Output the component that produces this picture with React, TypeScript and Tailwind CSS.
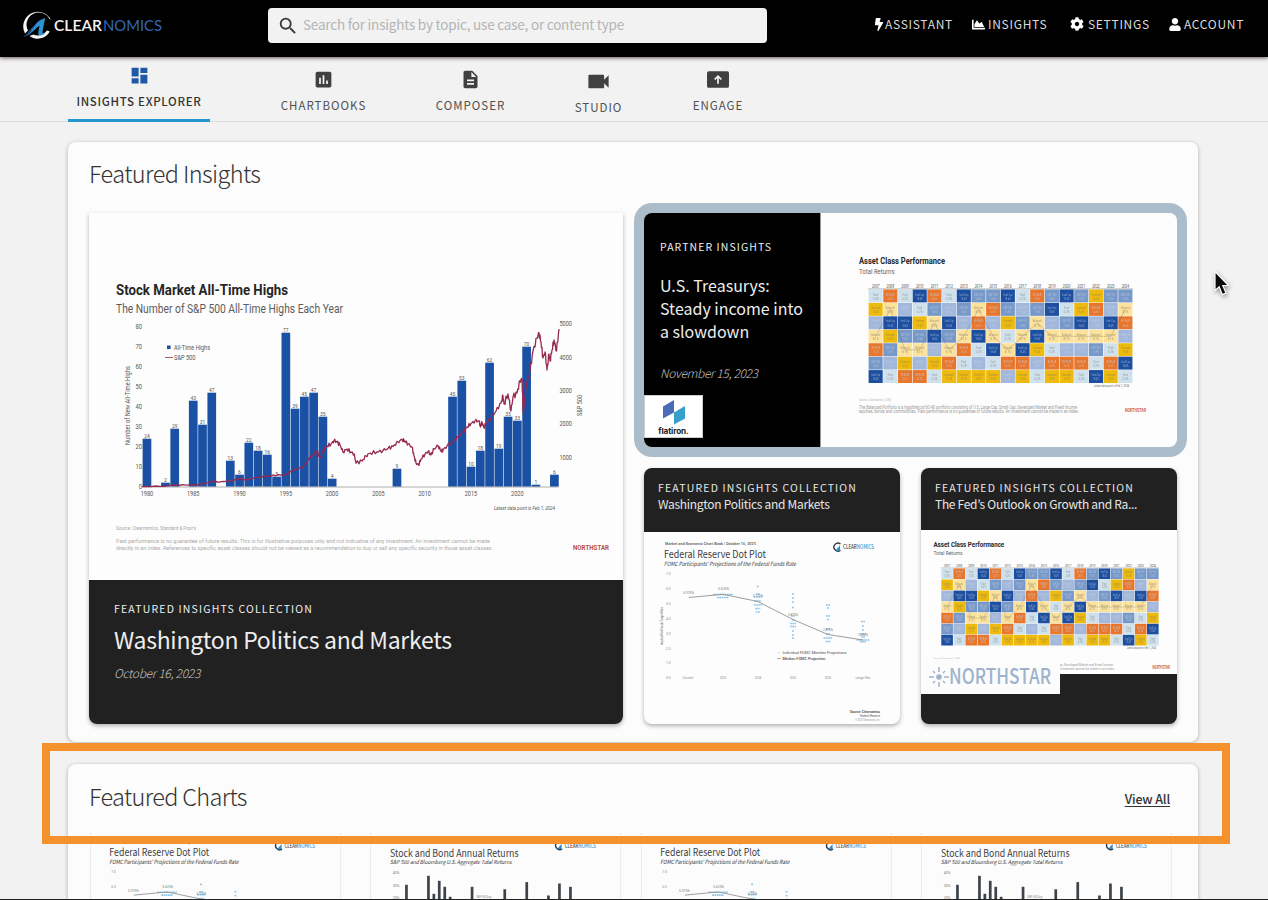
import type { ReactNode } from "react";
import { FaBolt, FaChartArea, FaCog, FaUser } from "react-icons/fa";
import { MdDashboard, MdDescription, MdInsertChart, MdSearch, MdVideocam } from "react-icons/md";

interface LabelProps {
  x: number;
  y: number;
  width?: number;
  size: number;
  fill?: string;
  weight?: number;
  italic?: boolean;
  anchor?: "start" | "middle" | "end";
  font?: string;
  children: ReactNode;
}

const SANS = "'Noto Sans CJK KR', 'Noto Sans', sans-serif";
const CONDENSED = "Roboto, 'Liberation Sans', sans-serif";

/** Chart label; `width` squeezes the text to a fixed length. */
function Label({ x, y, width, size, fill = "#555", weight = 400, italic, anchor = "start", font = CONDENSED, children }: LabelProps) {
  return (
    <text
      x={x}
      y={y}
      fontSize={size}
      fill={fill}
      fontWeight={weight}
      fontStyle={italic ? "italic" : undefined}
      textAnchor={anchor}
      fontFamily={font}
      textLength={width}
      lengthAdjust={width ? "spacingAndGlyphs" : undefined}
    >
      {children}
    </text>
  );
}

const HIGHS: [number, number][] = [
  [1980, 24], [1982, 2], [1983, 29], [1985, 43], [1986, 31], [1987, 47],
  [1989, 13], [1990, 6], [1991, 22], [1992, 18], [1993, 16], [1994, 5],
  [1995, 77], [1996, 39], [1997, 45], [1998, 47], [1999, 35], [2000, 4],
  [2007, 9], [2013, 45], [2014, 53], [2015, 10], [2016, 18], [2017, 62],
  [2018, 19], [2019, 35], [2020, 33], [2021, 70], [2022, 1], [2024, 6],
];

const SP500: [number, number][] = [
  [142, 486.6], [160, 486.3], [175, 485.2], [190, 484.8], [200, 484.6], [208, 482.5], [215, 481], [217, 482], [226, 481.4],
  [234, 480], [238, 479], [241, 478.4], [244, 480], [250, 479], [258, 477.2], [270, 476], [277, 475], [285, 475.2],
  [290, 472], [295, 469.5], [302, 467.5], [306, 463], [310, 457], [314, 454.5], [317, 451], [320, 458], [323, 451],
  [327, 446], [331, 444], [334, 440.5], [337, 442], [340, 445], [343, 452], [347, 449], [351, 452], [354, 454],
  [356, 463], [362, 461], [366, 456], [370, 453], [377, 452], [383, 450.5], [388, 448.5], [393, 446.5], [398, 442],
  [402, 439.5], [405, 441], [408, 444], [412, 447], [414, 456], [416, 463], [418.5, 465], [421, 459], [425, 454],
  [428, 451.5], [431, 455], [434, 449], [438, 445.5], [441, 451], [443, 450], [447, 446], [453, 442], [458, 437],
  [463, 432], [467, 427], [471, 423.5], [475, 421], [479, 421], [480.5, 427], [482, 422], [484, 428], [486, 423],
  [491, 418], [496, 411], [501, 403], [503, 396], [504, 404], [508, 394], [511, 411], [513, 397], [517, 393],
  [520, 381], [522, 379], [523.2, 414], [526, 387], [530, 371], [533, 351], [537, 338], [539, 333], [541, 342],
  [543, 358], [545, 352], [547, 370], [549, 354], [550, 361], [552, 350], [554, 340], [556.5, 351], [559, 329],
];

const yearX = (year: number) => 146.9 + (year - 1980) * 9.26;

// The index line wiggles between its anchor points.
const spPath = SP500.flatMap(([x, y], i) => {
  const next = SP500[i + 1];
  if (!next) return [`${x},${y}`];
  const swing = x < 240 ? 0.4 : x < 300 ? 0.8 : x < 500 ? 1.8 : 3;
  return [
    `${x},${y}`,
    ...[0.25, 0.5, 0.75].map((t, k) => {
      const jitter = Math.sin(i * 7.3 + k * 2.6) * swing;
      return `${(x + (next[0] - x) * t).toFixed(1)},${(y + (next[1] - y) * t + jitter).toFixed(1)}`;
    }),
  ];
}).join(" ");

function AllTimeHighsChart() {
  return (
    <svg viewBox="89 213 534 367" className="block h-[367px] w-full">
      <Label x={116} y={294.5} width={172} size={15} fill="#262626" weight={700}>Stock Market All-Time Highs</Label>
      <Label x={116} y={312.5} width={227} size={12.5} fill="#5c5c5c">The Number of S&amp;P 500 All-Time Highs Each Year</Label>
      {[0, 10, 20, 30, 40, 50, 60, 70, 80].map((n) => (
        <Label key={n} x={142} y={489 - n * 2} size={7} width={n ? 6.5 : 3.3} anchor="end">{n}</Label>
      ))}
      {[1000, 2000, 3000, 4000, 5000].map((n) => (
        <Label key={n} x={559.5} y={493 - n / 30} size={7.5} width={12.5}>{n}</Label>
      ))}
      {HIGHS.map(([year, value]) => (
        <g key={year}>
          <rect x={yearX(year) - 4.3} y={486.7 - value * 2} width={8.7} height={value * 2} fill="#1b51a4" />
          <Label x={yearX(year)} y={486 - value * 2} size={6} width={value > 9 ? 5.5 : 2.8} anchor="middle">{value}</Label>
        </g>
      ))}
      <path d="M142 487H558" stroke="#9a9a9a" strokeWidth=".8" />
      <polyline points={spPath} fill="none" stroke="#97294f" strokeWidth="1.3" strokeLinejoin="round" />
      {[1980, 1985, 1990, 1995, 2000, 2005, 2010, 2015, 2020].map((year) => (
        <Label key={year} x={yearX(year)} y={495.5} size={6.6} width={12.5} anchor="middle">{year}</Label>
      ))}
      <rect x="167" y="345.5" width="3.6" height="3.6" fill="#1b51a4" />
      <path d="M165 357.5H173" stroke="#8d3b3b" strokeWidth=".8" />
      <Label x={174} y={350} size={7} width={36}>All-Time Highs</Label>
      <Label x={174} y={360} size={7} width={21.5}>S&amp;P 500</Label>
      <g transform="rotate(-90 130 445)">
        <Label x={130} y={445} size={7.5} width={79}>Number of New All-Time Highs</Label>
      </g>
      <g transform="rotate(-90 581.5 416)">
        <Label x={581.5} y={416} size={7.5} width={21}>S&amp;P 500</Label>
      </g>
      <Label x={494} y={510} size={5.8} width={61} italic>Latest data point is Feb 1, 2024</Label>
      <Label x={116} y={529.5} size={5.5} width={80} fill="#a5a5a5">Source: Clearnomics, Standard &amp; Poor's</Label>
      <Label x={116} y={543} size={5.8} width={374} fill="#aaa">
        Past performance is no guarantee of future results. This is for illustrative purposes only and not indicative of any investment. An investment cannot be made
      </Label>
      <Label x={116} y={550} size={5.8} width={377} fill="#aaa">
        directly in an index. References to specific asset classes should not be viewed as a recommendation to buy or sell any specific security in those asset classes.
      </Label>
      <Label x={573} y={549.5} size={8} width={36} weight={700} fill="#b8523f">NORTHSTAR</Label>
    </svg>
  );
}

const CELL_COLORS: Record<string, string> = {
  L: "#cfe1ec",
  O: "#e8762c",
  D: "#1d4fa1",
  M: "#7799c9",
  P: "#a1b8dc",
  Y: "#eeba0c",
  C: "#fce29b",
};

const CELL_NAMES: Record<string, [string, string]> = {
  L: ["Fixed", "5.2%"],
  O: ["EM", "34.5%"],
  D: ["Small Cap", "18.4%"],
  M: ["S&P 500", "15.8%"],
  P: ["EAFE", "11.6%"],
  Y: ["Commod", "16.2%"],
  C: ["Balanced", "8.1%"],
};

const RETURNS = [
  "LOLDOLDMMDLOMDMYMM",
  "YCPLMPMCOMPMDLYOPC",
  "PDDYCDPOPYMCPMDPDO",
  "CYMMDMCDCLCDCCCCCP",
  "OMCCPCOLDCDYLPPMLY",
  "MPYPYOLPLOOPOOOLOD",
  "DLOOLYYYYPYLYYLDYL",
];

const CELL_W = 14.69;
const CELL_H = 13.43;

const balancedPath = Array.from({ length: 18 }, (_, col) => {
  const row = RETURNS.findIndex((line) => line[col] === "C");
  return `${868.3 + (col + 0.5) * CELL_W},${289.3 + (row + 0.5) * CELL_H}`;
}).join(" ");

function AssetClassChart({ viewBox, className }: { viewBox: string; className: string }) {
  return (
    <svg viewBox={viewBox} className={className}>
      <Label x={859} y={263.5} size={8.6} width={86} weight={700} fill="#262626">Asset Class Performance</Label>
      <Label x={859} y={273.5} size={7} width={35.5} fill="#666">Total Returns</Label>
      <path d="M868 288.9H1133" stroke="#888" strokeWidth=".6" />
      {RETURNS.map((line, row) =>
        line.split("").map((code, col) => (
          <rect
            key={`${row}-${col}`}
            x={868.6 + col * CELL_W}
            y={289.5 + row * CELL_H}
            width={CELL_W - 0.6}
            height={CELL_H - 0.5}
            fill={CELL_COLORS[code]}
          />
        )),
      )}
      <polyline points={balancedPath} fill="none" stroke="#555" strokeWidth=".5" opacity=".5" />
      {RETURNS.map((line, row) =>
        line.split("").map((code, col) => {
          const x = 868.3 + (col + 0.5) * CELL_W;
          const y = 289.3 + row * CELL_H;
          const fill = "LCY".includes(code) ? "#77736a" : "#c9cfdd";
          return (
            <g key={`${row}-${col}`} opacity=".65">
              <Label x={x} y={y + 6.3} size={3.6} width={code === "L" ? 5 : 9} anchor="middle" fill={fill}>{CELL_NAMES[code][0]}</Label>
              <Label x={x} y={y + 10.4} size={3.6} width={6} anchor="middle" fill={fill}>{CELL_NAMES[code][1]}</Label>
            </g>
          );
        }),
      )}
      {Array.from({ length: 18 }, (_, i) => (
        <Label key={i} x={868.3 + (i + 0.5) * CELL_W} y={287.7} size={4.4} width={7.5} anchor="middle" italic>{2007 + i}</Label>
      ))}
      <Label x={1094} y={386.8} size={3.6} width={35} italic fill="#666">Latest data point is Feb 1, 2024</Label>
      <Label x={859} y={400.5} size={4} width={32} fill="#b5b5b5">Source: Clearnomics, LSEG</Label>
      <Label x={859} y={408.5} size={4.5} width={218} fill="#999">
        The Balanced Portfolio is a hypothetical 60/40 portfolio consisting of U.S. Large Cap, Small Cap, Developed Market and Fixed Income
      </Label>
      <Label x={859} y={413} size={4.5} width={220} fill="#999">
        equities, bonds and commodities. Past performance is no guarantee of future results. An investment cannot be made in an index.
      </Label>
      <Label x={1125} y={412} size={5.4} width={21} weight={700} fill="#d0604c">NORTHSTAR</Label>
    </svg>
  );
}

function MiniBrand({ x, y }: { x: number; y: number }) {
  return (
    <g>
      <path d={`M${x + 6.5} ${y - 3}A4 4 0 1 0 ${x + 6.5} ${y + 3.2}`} fill="none" stroke="#2d3b4a" strokeWidth="1.4" />
      <path d={`M${x + 1.5} ${y + 3.5}L${x + 6} ${y - 1.8}V${y + 3.5}Z`} fill="#2f8fd0" />
      <text x={x + 9} y={y + 2.2} fontFamily={SANS} fontSize="5.6" fontWeight="500" fill="#444" textLength="31" lengthAdjust="spacingAndGlyphs">
        CLEAR<tspan fill="#3a9ad6">NOMICS</tspan>
      </text>
    </g>
  );
}

// [column x, dot rows as [y, half width]]
const DOTS: [number, [number, number][]][] = [
  [723, [[594.5, 10], [597.5, 6]]],
  [757.8, [[586.5, 1], [594, 2], [597, 4], [601, 3.5], [605, 4], [608.5, 2.5], [612, 2]]],
  [793, [[594, 1], [598, 1], [602, 1], [607.5, 1], [616, 2], [620, 1.5], [623.5, 3], [626.5, 3], [631, 1], [635, 1], [638, 1]]],
  [828, [[605, 2], [608, 1], [616, 2], [619.5, 1], [629, 2], [634, 2], [638, 4.5], [641.5, 2.5]]],
  [863, [[621.5, 2], [626, 1], [630, 1], [634, 3], [637, 2], [640, 6.5], [641.8, 3]]],
];

function DotPlotChart({ viewBox, className }: { viewBox: string; className: string }) {
  return (
    <svg viewBox={viewBox} className={className}>
      <Label x={665} y={545} size={4.4} width={91} weight={600} fill="#666">Market and Economic Chart Book | October 16, 2023</Label>
      <Label x={664} y={558} size={10.3} width={102} fill="#3d3d3d" font={SANS}>Federal Reserve Dot Plot</Label>
      <Label x={664} y={566} size={5.8} width={132} italic fill="#333" font={SANS}>FOMC Participants' Projections of the Federal Funds Rate</Label>
      <MiniBrand x={834} y={547} />
      {["7.0", "6.0", "5.0", "4.0", "3.0", "2.0", "1.0", "0.0"].map((n, i) => (
        <Label key={n} x={670.5} y={575 + i * 14.9} size={4.4} width={4.5} anchor="end" fill="#888">{n}</Label>
      ))}
      <g transform="rotate(-90 662.5 645)">
        <Label x={662.5} y={645} size={4} width={38} fill="#555">Implied Fed Funds Target Rate</Label>
      </g>
      {DOTS.map(([x, rows]) =>
        rows.map(([y, half]) => (
          <path key={`${x}-${y}`} d={`M${x - half} ${y}h${half * 2}`} stroke="#8cc4e8" strokeWidth="1.6" strokeDasharray="1.8 .5" />
        )),
      )}
      <polyline points="689,597.5 723,594.3 757.8,601.5 793,619.5 828,634.5 863,640" fill="none" stroke="#929292" strokeWidth=".9" />
      <Label x={683} y={594} size={4.2} width={11} fill="#777">5.375%</Label>
      <Label x={718} y={590} size={4.2} width={11} fill="#777">5.625%</Label>
      <Label x={753} y={597.2} size={4.2} width={10} fill="#777">5.125%</Label>
      <Label x={788} y={616} size={4.2} width={10} fill="#777">3.875%</Label>
      <Label x={823} y={630.5} size={4.2} width={10} fill="#777">2.875%</Label>
      <Label x={858} y={636} size={4.2} width={10} fill="#777">2.500%</Label>
      <circle cx="779" cy="652.8" r=".7" fill="#8cc4e8" />
      <path d="M777 658.6h4" stroke="#888" strokeWidth=".7" />
      <Label x={782.5} y={654.4} size={4.4} width={64}>Individual FOMC Member Projections</Label>
      <Label x={782.5} y={660.4} size={4.4} width={43} weight={500}>Median FOMC Projection</Label>
      {["Current", "2023", "2024", "2025", "2026", "Longer Run"].map((n, i) => (
        <Label key={n} x={688 + i * 35} y={678.6} size={4.2} width={n.length > 7 ? 15 : n.length > 4 ? 10.5 : 6.5} anchor="middle" fill="#888">{n}</Label>
      ))}
      <Label x={850} y={713} size={4.2} width={30} weight={700}>Source: Clearnomics</Label>
      <Label x={860} y={716.5} size={3.2} width={20} italic>Federal Reserve</Label>
      <Label x={855} y={720.5} size={3} width={25} italic fill="#999">© 2023 Clearnomics, Inc.</Label>
    </svg>
  );
}

const RETURN_BARS: [number, number][] = [
  [405.7, 885], [427.7, 876], [433.1, 894], [438.5, 881], [444, 887], [449.4, 897],
  [471.3, 887], [504, 889.5], [526, 882.3], [547.7, 895.7], [558.7, 883.7], [569.7, 887],
];

function AnnualReturnsChart() {
  return (
    <svg viewBox="370.8 833.2 250 90" className="block h-[90px] w-[250px]">
      <MiniBrand x={555.5} y={845.7} />
      <Label x={389.8} y={857} size={10.3} width={128.5} fill="#3d3d3d" font={SANS}>Stock and Bond Annual Returns</Label>
      <Label x={389.8} y={864.5} size={5.6} width={121.5} italic fill="#333" font={SANS}>S&amp;P 500 and Bloomberg U.S. Aggregate Total Returns</Label>
      <Label x={399} y={874.5} size={4.4} width={6.5} anchor="end" fill="#777">40%</Label>
      <Label x={399} y={887} size={4.4} width={6.5} anchor="end" fill="#777">30%</Label>
      <Label x={399} y={899.5} size={4.4} width={6.5} anchor="end" fill="#777">20%</Label>
      <Label x={476} y={898} size={4.2} width={15} fill="#888">S&amp;P 500 Avg</Label>
      {RETURN_BARS.map(([x, y]) => (
        <rect key={x} x={x - 0.8} y={y} width="2.7" height={923 - y} fill="#3d434b" />
      ))}
    </svg>
  );
}

function Logo() {
  return (
    <svg viewBox="0 0 142 32" className="h-8 w-[142px]" role="img" aria-label="Clearnomics">
      <path d="M28.8 10.5A14 14 0 1 0 3 24.5L6 21.5A10.8 10.8 0 0 1 27.4 10Z" fill="#f4f4f4" />
      <path d="M7.5 27A13.8 13.8 0 0 0 27.8 22.5L25 21.5A11 11 0 0 1 11.5 25.5Z" fill="#f4f4f4" />
      <path d="M1 28.5C7 26.5 9 22 12 17.5 15.5 12 18 11 23.2 9L20.5 22.5c-.3 1.8.6 2.3 2.4 2.1-2.4 2.5-7.4 2.8-6.6-1.4l1.2-6.4C12.5 20 9 26 1 28.5Z" fill="#2a93d1" />
      <path d="M1 28.5C8 25.5 10 19.5 15 14.5 9 18 6.5 25 1 28.5Z" fill="#2c5fae" />
      <text x="32" y="22" fontFamily="Lato, sans-serif" fontSize="15.5" fontWeight="600" fill="#f2f2f2" textLength="48" lengthAdjust="spacingAndGlyphs">CLEAR</text>
      <text x="81" y="22" fontFamily="Lato, sans-serif" fontSize="15.5" fill="#3468b3" textLength="59" lengthAdjust="spacingAndGlyphs">NOMICS</text>
    </svg>
  );
}

function Header() {
  return (
    <header className="relative z-10 flex h-[57px] shrink-0 bg-black pl-[22px] shadow-[0_1px_4px_rgba(40,20,30,0.7)]">
      <div className="w-[246px] pt-[9px]">
        <Logo />
      </div>
      <div className="mt-2 flex h-[35px] w-[499px] items-center rounded-[4px] bg-[#f2f2f2] pl-[9px]">
        <MdSearch className="size-[22px] text-[#3a3a3a]" />
        <span className="ml-1 pb-[3px] text-[13.5px] leading-5 tracking-[-0.2px] text-[#b4b4b4]">
          Search for insights by topic, use case, or content type
        </span>
      </div>
      <nav className="ml-auto flex h-12 items-center pr-[22px] text-[12px] leading-5 tracking-[0.7px] text-[#dcdcdc]">
        <a className="flex w-[98px] items-center">
          <FaBolt className="mr-px h-[13px] w-[10px] shrink-0 text-white" />
          ASSISTANT
        </a>
        <a className="flex w-[98px] items-center">
          <FaChartArea className="mr-[3px] h-[13px] w-[13px] shrink-0 text-white" />
          INSIGHTS
        </a>
        <a className="flex w-[99px] items-center">
          <FaCog className="mr-1 h-[14px] w-[14px] shrink-0 text-white" />
          SETTINGS
        </a>
        <a className="flex w-[77px] items-center">
          <FaUser className="mr-[3px] h-[13px] w-[12px] shrink-0 text-white" />
          ACCOUNT
        </a>
      </nav>
    </header>
  );
}

function Tabs() {
  const label = "text-[11.5px] leading-4 tracking-[1px] text-[#505050]";
  return (
    <nav className="flex h-[65px] shrink-0 border-b border-[#dcdcdc] pl-[68px]">
      <a className="flex h-[65px] w-[142px] flex-col items-center border-b-[3px] border-[#2596cf] pt-2">
        <MdDashboard className="size-[21px] text-[#2058a8]" />
        <span className="mt-[7px] text-[11.5px] leading-4 font-medium tracking-[0.7px] whitespace-nowrap text-[#333]">INSIGHTS EXPLORER</span>
      </a>
      <a className="ml-[51px] flex w-[125px] flex-col items-center pt-[12px]">
        <MdInsertChart className="size-[21px] text-[#404040]" />
        <span className={`mt-[7px] ${label}`}>CHARTBOOKS</span>
      </a>
      <a className="ml-[29px] flex w-[111px] flex-col items-center pt-[12px]">
        <MdDescription className="size-[21px] text-[#404040]" />
        <span className={`mt-[7px] ${label}`}>COMPOSER</span>
      </a>
      <a className="ml-[22px] flex w-[101px] flex-col items-center pt-[11px]">
        <MdVideocam className="size-[27px] text-[#404040]" />
        <span className={`mt-[4px] ${label}`}>STUDIO</span>
      </a>
      <a className="ml-[19px] flex w-[100px] flex-col items-center pt-[14px]">
        <svg viewBox="0 0 24 18" className="h-[17px] w-[22px]" fill="none">
          <rect width="24" height="18" rx="2" fill="#404040" />
          <path d="M12 13.5V5.5M8.3 9L12 5.3 15.7 9" stroke="#f2f2f2" strokeWidth="1.9" />
        </svg>
        <span className={`mt-[9px] ${label}`}>ENGAGE</span>
      </a>
    </nav>
  );
}

function FlatironBadge() {
  return (
    <div className="absolute bottom-[9px] left-0 flex h-[43px] w-[59px] flex-col items-center border border-[#ccc] bg-white pt-[3px]">
      <svg viewBox="0 0 24 26" className="h-[26px] w-6">
        <path d="M1 7.5L12 1v12.5L1 19.5Z" fill="#4a6cb8" />
        <path d="M12 13.5L23 7v12.5L12 25.5Z" fill="#35a0cb" />
      </svg>
      <span className="font-[Inter,sans-serif] text-[8.2px] leading-3 font-bold tracking-[-0.1px] text-[#222]">flatiron.</span>
    </div>
  );
}

function NorthstarBadge() {
  return (
    <div className="absolute bottom-[30px] left-0 flex h-[35px] w-[139px] items-center bg-[#fcfcfc] pl-2">
      <svg viewBox="0 0 20 20" className="size-5" stroke="#9db3cd" strokeWidth="1.5">
        <circle cx="10" cy="10" r="2.8" fill="#9db3cd" stroke="none" />
        <path d="M10 0v5M10 15v5M0 10h5M15 10h5M4 4l2 2M14 14l2 2M4 16l2-2M14 6l2-2" />
      </svg>
      <svg viewBox="0 0 103 24" className="h-6 w-[103px]">
        <text x="0" y="19" fontFamily={SANS} fontSize="21" fontWeight="500" fill="#9db3cd" textLength="102" lengthAdjust="spacingAndGlyphs">NORTHSTAR</text>
      </svg>
    </div>
  );
}

function CollectionHeading({ title }: { title: string }) {
  return (
    <div className="pl-[14px] pt-3 text-[#e6e6e6]">
      <p className="text-[10.5px] leading-4 tracking-[1.17px] whitespace-nowrap">FEATURED INSIGHTS COLLECTION</p>
      <p className="text-[12px] leading-4 tracking-[-0.3px] whitespace-nowrap">{title}</p>
    </div>
  );
}

function FeaturedInsights() {
  const cardShadow = "shadow-[0_2px_4px_rgba(0,0,0,0.3)]";
  return (
    <section className="h-[600px] shrink-0 rounded-[8px] bg-[#fcfcfc] px-[21px] pt-4 shadow-[0_1px_4px_rgba(0,0,0,0.28)]">
      <h2 className="h-[55px] text-[23.5px] leading-[30px] font-light tracking-[-0.6px] text-[#333]">Featured Insights</h2>
      <div className="grid grid-cols-[534px_533px] gap-[21px]">
        <article className={`h-[511px] overflow-hidden rounded-b-[8px] bg-[#fdfdfd] ${cardShadow}`}>
          <AllTimeHighsChart />
          <div className="h-36 bg-[#212121] pl-[25px] pt-[21px] text-[#eee]">
            <p className="text-[10.5px] leading-4 tracking-[1.17px]">FEATURED INSIGHTS COLLECTION</p>
            <h3 className="mt-[6px] text-[23px] leading-8 tracking-[-0.28px]">Washington Politics and Markets</h3>
            <p className="mt-[10px] text-[12px] leading-4 font-light tracking-[-0.28px] text-[#c4c4c4] italic">October 16, 2023</p>
          </div>
        </article>
        <div className="flex flex-col gap-[21px]">
          <article className="relative flex h-[234px] rounded-[8px] shadow-[0_2px_5px_rgba(0,0,0,0.5)] ring-[10px] ring-[#abbdca]">
            <div className="w-[176px] rounded-l-[8px] bg-black pl-4 pt-[26px] text-[#ededed]">
              <p className="text-[10.5px] leading-4 tracking-[1.07px]">PARTNER INSIGHTS</p>
              <h3 className="mt-[19px] w-[158px] text-[16px] leading-[23px]">
                U.S. Treasurys: <br />
                Steady income into <br />a slowdown
              </h3>
              <p className="mt-[22px] text-[12px] leading-4 font-light tracking-[-0.35px] text-[#c4c4c4] italic">November 15, 2023</p>
            </div>
            <div className="flex-1 overflow-hidden rounded-r-[8px] border-l border-[#999] bg-[#fdfdfd]">
              <AssetClassChart viewBox="821 213 356 234" className="block h-[234px] w-[356px]" />
            </div>
            <FlatironBadge />
          </article>
          <div className="flex justify-between">
            <article className={`h-64 w-64 overflow-hidden rounded-[8px] bg-[#fdfdfd] ${cardShadow}`}>
              <div className="h-16 bg-[#212121]">
                <CollectionHeading title="Washington Politics and Markets" />
              </div>
              <DotPlotChart viewBox="644 532 256 192" className="block h-48 w-64" />
            </article>
            <article className={`relative h-64 w-64 overflow-hidden rounded-[8px] bg-[#212121] ${cardShadow}`}>
              <div className="h-[62px]">
                <CollectionHeading title="The Fed’s Outlook on Growth and Ra..." />
              </div>
              <AssetClassChart viewBox="844 242.8 310.7 174.8" className="block h-36 w-64 bg-[#fdfdfd]" />
              <NorthstarBadge />
            </article>
          </div>
        </div>
      </div>
    </section>
  );
}

function FeaturedCharts() {
  const thumb = "w-[251px] overflow-hidden border-x border-dotted border-[#ddd]";
  return (
    <section className="mt-[22px] h-[200px] shrink-0 rounded-t-[8px] bg-[#fcfcfc] px-[21px] shadow-[0_1px_4px_rgba(0,0,0,0.28)]">
      <div className="flex h-[69px] items-center justify-between pr-[7px]">
        <h2 className="-mt-[6px] text-[23.5px] leading-[30px] font-light tracking-[-0.67px] text-[#333]">Featured Charts</h2>
        <a className="text-[12.5px] leading-5 font-medium tracking-[-0.15px] text-[#333] underline underline-offset-2">View All</a>
      </div>
      <div className="flex justify-between pl-px pr-[5px]">
        {[0, 1].map((pair) => (
          <div key={pair} className="flex gap-[29px]">
            <div className={thumb}>
              <DotPlotChart viewBox="645.5 534 255 92" className="block h-[90px] w-[250px]" />
            </div>
            <div className={thumb}>
              <AnnualReturnsChart />
            </div>
          </div>
        ))}
      </div>
    </section>
  );
}

export default function App() {
  return (
    <div className="relative flex h-[900px] w-[1268px] flex-col overflow-hidden border-b border-[#222] bg-[#f2f2f2] font-['Noto_Sans_CJK_KR','Noto_Sans',sans-serif]">
      <Header />
      <Tabs />
      <main className="flex flex-col pl-[68px] pr-[70px] pt-5">
        <FeaturedInsights />
        <FeaturedCharts />
      </main>
      {/* Highlight frame around the charts heading */}
      <div className="absolute left-[42px] top-[743px] h-[101px] w-[1188px] border-8 border-[#f6922e]" />
      <svg viewBox="0 0 18 28" className="absolute left-[1213px] top-[270px] h-7 w-[18px] drop-shadow-[1px_2px_2px_rgba(0,0,0,0.4)]">
        <path d="M2 1.5V20.5L6.2 16.8 9.3 24.6 13 23 9.8 15.5H15.5Z" fill="#0a0a0a" stroke="#fff" strokeWidth="1.2" />
      </svg>
    </div>
  );
}
